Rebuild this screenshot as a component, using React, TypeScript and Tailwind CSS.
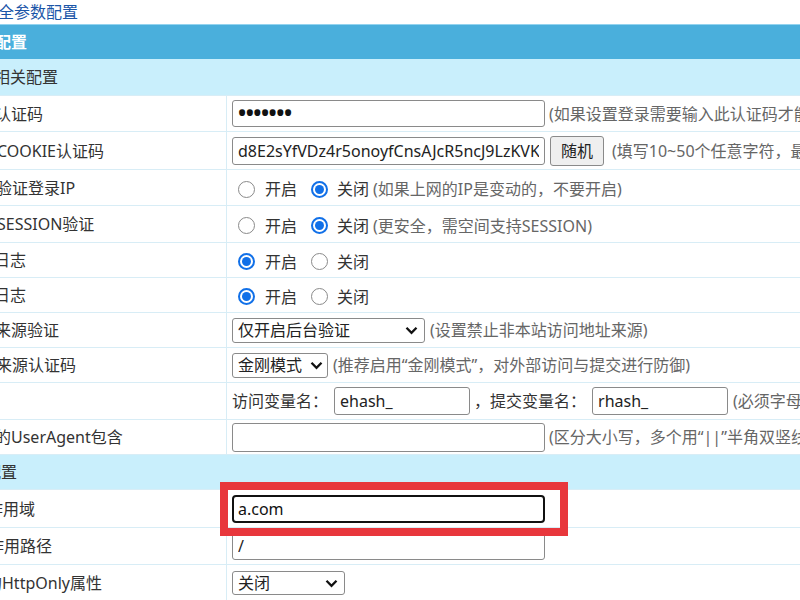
import React from "react";

const FONT = "font-['Noto_Sans','Noto_Sans_CJK_SC',sans-serif]";

function Radio({ on }: { on?: boolean }) {
  return on ? (
    <span className="flex h-[17px] w-[17px] shrink-0 items-center justify-center rounded-full border-2 border-[#1170e8] bg-white">
      <span className="block h-[9px] w-[9px] rounded-full bg-[#1170e8]" />
    </span>
  ) : (
    <span className="block h-[17px] w-[17px] shrink-0 rounded-full border border-[#8a8a8a] bg-white" />
  );
}

function Chevron() {
  return (
    <svg width="13" height="9" viewBox="0 0 13 9" className="shrink-0">
      <path d="M1.5 1.8 L6.5 6.8 L11.5 1.8" fill="none" stroke="#111" strokeWidth="2.3" />
    </svg>
  );
}

function Row({
  h,
  label,
  off,
  children,
}: {
  h: string;
  label: string;
  off: string;
  children?: React.ReactNode;
}) {
  return (
    <div className={`flex ${h} border-b border-[#d8edf6]`}>
      <div className="flex w-[227px] shrink-0 items-center overflow-hidden border-r border-[#d8edf6] text-[#333]">
        <span className={`${off} whitespace-nowrap`}>{label}</span>
      </div>
      <div className="flex min-w-0 flex-1 items-center overflow-hidden whitespace-nowrap pl-[5px]">
        {children}
      </div>
    </div>
  );
}

function Hint({ children, cls = "" }: { children: React.ReactNode; cls?: string }) {
  return <span className={`whitespace-nowrap text-[#666] ${cls}`}>{children}</span>;
}

function OnOff({ on, hint }: { on: boolean; hint?: string }) {
  return (
    <div className="flex items-center pt-[3px]">
      <span className="ml-[6px] flex">
        <Radio on={on} />
      </span>
      <span className="ml-[10px] text-[#333]">开启</span>
      <span className="ml-[14px] flex">
        <Radio on={!on} />
      </span>
      <span className="ml-[9px] text-[#333]">关闭</span>
      {hint && <Hint cls="ml-[4px]">{hint}</Hint>}
    </div>
  );
}

const inputCls =
  "h-[27px] shrink-0 rounded-[3px] border border-[#8a8a8a] bg-white px-[5px] text-[16px] text-[#222] outline-none";

export default function App() {
  return (
    <div className={`relative h-[600px] w-[800px] overflow-hidden bg-white text-[16px] ${FONT}`}>
      <div className="flex h-[24px] items-center">
        <span className="-ml-[2px] text-[#1b56a8]">全参数配置</span>
      </div>
      <div className="flex h-[35px] items-center border-t border-[#93d3ef] bg-[#4aafdc]">
        <span className="-ml-[5px] font-bold text-white">配置</span>
      </div>
      <div className="flex h-[37px] items-center border-b border-[#d8edf6] bg-[#c9effc]">
        <span className="-ml-[6px] text-[#333]">相关配置</span>
      </div>

      <Row h="h-[36px]" label="认证码" off="-ml-[5px]">
        <input
          type="password"
          readOnly
          defaultValue="1234567"
          className="h-[27px] w-[313px] shrink-0 rounded-[3px] border border-[#8a8a8a] bg-white px-[4px] text-[27px] tracking-[-2.5px] text-[#111] outline-none"
        />
        <Hint cls="ml-[4px]">(如果设置登录需要输入此认证码才能登录)</Hint>
      </Row>
      <Row h="h-[38px]" label="COOKIE认证码" off="-ml-[3px]">
        <input
          readOnly
          defaultValue="d8E2sYfVDz4r5onoyfCnsAJcR5ncJ9LzKVK5xY2m"
          className={`${inputCls} h-[28px] w-[313px]`}
        />
        <button className="ml-[5px] h-[30px] w-[54px] shrink-0 rounded-[3px] border border-[#8a8a8a] bg-[#efefef] text-[16px] text-[#222]">
          随机
        </button>
        <Hint cls="ml-[8px]">(填写10~50个任意字符，最好是字母数字组合)</Hint>
      </Row>
      <Row h="h-[36px]" label="验证登录IP" off="-ml-[4px]">
        <OnOff on={false} hint="(如果上网的IP是变动的，不要开启)" />
      </Row>
      <Row h="h-[37px]" label="SESSION验证" off="-ml-[3px]">
        <OnOff on={false} hint="(更安全，需空间支持SESSION)" />
      </Row>
      <Row h="h-[35px]" label="日志" off="-ml-[6px]">
        <OnOff on={true} />
      </Row>
      <Row h="h-[35px]" label="日志" off="-ml-[6px]">
        <OnOff on={true} />
      </Row>
      <Row h="h-[35px]" label="来源验证" off="-ml-[5px]">
        <div className="flex h-[25px] w-[193px] shrink-0 items-center justify-between rounded-[3px] border border-[#8a8a8a] bg-white pl-[5px] pr-[6px] text-[#222]">
          <span>仅开启后台验证</span>
          <Chevron />
        </div>
        <Hint cls="ml-[5px]">(设置禁止非本站访问地址来源)</Hint>
      </Row>
      <Row h="h-[35px]" label="来源认证码" off="-ml-[4px]">
        <div className="flex h-[25px] w-[96px] shrink-0 items-center justify-between rounded-[3px] border border-[#8a8a8a] bg-white pl-[5px] pr-[4px] text-[#222]">
          <span>金刚模式</span>
          <Chevron />
        </div>
        <Hint cls="ml-[5px]">(推荐启用“金刚模式”，对外部访问与提交进行防御)</Hint>
      </Row>
      <Row h="h-[37px]" label="" off="">
        <span className="text-[#333]">访问变量名：</span>
        <input readOnly defaultValue="ehash_" className={`${inputCls} ml-[6px] h-[28px] w-[136px]`} />
        <span className="ml-[4px] text-[#333]">，提交变量名：</span>
        <input readOnly defaultValue="rhash_" className={`${inputCls} ml-[6px] h-[28px] w-[136px]`} />
        <Hint cls="ml-[5px]">(必须字母开头，只能是字母数字)</Hint>
      </Row>
      <Row h="h-[35px]" label="的UserAgent包含" off="-ml-[5px]">
        <input readOnly defaultValue="" className={`${inputCls} h-[29px] w-[313px]`} />
        <Hint cls="ml-[4px]">(区分大小写，多个用“||”半角双竖线隔开)</Hint>
      </Row>

      <div className="flex h-[35px] items-center border-b border-[#d8edf6] bg-[#c9effc]">
        <span className="-ml-[15px] text-[#333]">配置</span>
      </div>

      <Row h="h-[38px]" label="作用域" off="-ml-[13px]">
        <input
          readOnly
          defaultValue="a.com"
          className="h-[28px] w-[313px] shrink-0 rounded-[4px] border-2 border-[#111] bg-white px-[4px] text-[16px] text-[#111] outline-none"
        />
      </Row>
      <Row h="h-[37px]" label="作用路径" off="-ml-[12px]">
        <input readOnly defaultValue="/" className={`${inputCls} w-[313px]`} />
      </Row>
      <Row h="h-[37px]" label="的HttpOnly属性" off="-ml-[14px]">
        <div className="flex h-[24px] w-[113px] shrink-0 items-center justify-between rounded-[3px] border border-[#8a8a8a] bg-white pl-[5px] pr-[6px] text-[#222]">
          <span>关闭</span>
          <Chevron />
        </div>
      </Row>

      <div className="pointer-events-none absolute left-[220px] top-[482px] h-[54px] w-[348px] border-[8px] border-[#e8373c]" />
    </div>
  );
}
